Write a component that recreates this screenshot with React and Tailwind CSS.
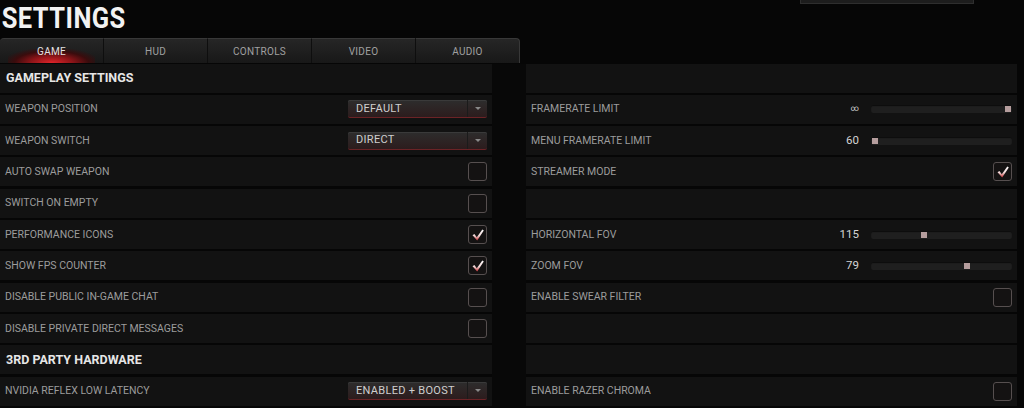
import React from 'react';

const font = { fontFamily: 'Roboto, "Liberation Sans", sans-serif' };

const Check = () => (
    <svg width="14" height="14" viewBox="0 0 14 14">
        <defs>
            <linearGradient id="chk" x1="0" y1="0" x2="0" y2="1">
                <stop offset="0" stopColor="#ffffff" />
                <stop offset="0.55" stopColor="#f1d6d6" />
                <stop offset="1" stopColor="#c0262b" />
            </linearGradient>
        </defs>
        <path d="M1.5 7.2 L3.4 6 L5.8 9.2 L11.3 1.6 L12.8 2.6 L6.2 12.6 Z" fill="url(#chk)" />
    </svg>
);

const Checkbox = ({ checked }) => (
    <div className="w-[19px] h-[19px] rounded-[3px] border border-[#564f4f] bg-[#141212] flex items-center justify-center">
        {checked && <Check />}
    </div>
);

const Dropdown = ({ value }) => (
    <div className="w-[139px] h-[18px] flex rounded-[2px] border-b border-[#6b2326] bg-gradient-to-b from-[#2d2d2d] to-[#2c1c1d] shadow-[inset_0_1px_0_#3a3a3a]">
        <div className="flex-1 flex items-center pl-2 text-[11px] tracking-[0.3px] text-[#cfcfcf]">{value}</div>
        <div className="w-[20px] border-l border-[#1b1b1b] flex items-center justify-center">
            <div className="w-0 h-0 border-l-[3px] border-r-[3px] border-t-[3px] border-l-transparent border-r-transparent border-t-[#8a8a8a]" />
        </div>
    </div>
);

const Slider = ({ label, pos, small }) => (
    <div className="flex items-center">
        <div className={`w-[40px] text-right text-[#d4d4d4] pr-[1px] ${small ? 'text-[8px]' : 'text-[11.5px]'}`}>{label}</div>
        <div className="ml-[11px] relative w-[141px] h-[8px] rounded-[2px] bg-[#1f1f1f] shadow-[inset_0_1px_1px_#0c0c0c]">
            <div className="absolute top-[1px] w-[6px] h-[6px] bg-[#b59d9d]" style={{ left: pos }} />
        </div>
    </div>
);

const Row = ({ item }) => {
    if (item.type === 'empty') return <div className="h-[29px] bg-[#121212]" />;
    if (item.type === 'header')
        return (
            <div className="h-[29px] bg-[#121212] flex items-center pl-[6px] text-[12.5px] font-bold text-[#e6e6e6]">
                {item.label}
            </div>
        );
    return (
        <div className="h-[29px] bg-[#121212] flex items-center justify-between pl-[5px] pr-[5px]">
            <div className="text-[10.5px] text-[#9c9c9c]">{item.label}</div>
            {item.type === 'drop' && <Dropdown value={item.value} />}
            {item.type === 'check' && <Checkbox checked={item.checked} />}
            {item.type === 'slider' && <Slider label={item.value} pos={item.pos} small={item.small} />}
        </div>
    );
};

const left = [
    { type: 'header', label: 'GAMEPLAY SETTINGS' },
    { type: 'drop', label: 'WEAPON POSITION', value: 'DEFAULT' },
    { type: 'drop', label: 'WEAPON SWITCH', value: 'DIRECT' },
    { type: 'check', label: 'AUTO SWAP WEAPON' },
    { type: 'check', label: 'SWITCH ON EMPTY' },
    { type: 'check', label: 'PERFORMANCE ICONS', checked: true },
    { type: 'check', label: 'SHOW FPS COUNTER', checked: true },
    { type: 'check', label: 'DISABLE PUBLIC IN-GAME CHAT' },
    { type: 'check', label: 'DISABLE PRIVATE DIRECT MESSAGES' },
    { type: 'header', label: '3RD PARTY HARDWARE' },
    { type: 'drop', label: 'NVIDIA REFLEX LOW LATENCY', value: 'ENABLED + BOOST' },
];

const right = [
    { type: 'empty' },
    { type: 'slider', label: 'FRAMERATE LIMIT', value: '∞', pos: 134, small: true },
    { type: 'slider', label: 'MENU FRAMERATE LIMIT', value: '60', pos: 1 },
    { type: 'check', label: 'STREAMER MODE', checked: true },
    { type: 'empty' },
    { type: 'slider', label: 'HORIZONTAL FOV', value: '115', pos: 50 },
    { type: 'slider', label: 'ZOOM FOV', value: '79', pos: 93 },
    { type: 'check', label: 'ENABLE SWEAR FILTER' },
    { type: 'empty' },
    { type: 'empty' },
    { type: 'check', label: 'ENABLE RAZER CHROMA' },
];

const tabs = ['GAME', 'HUD', 'CONTROLS', 'VIDEO', 'AUDIO'];

const App = () => {
    return (
        <div className="w-[1024px] h-[408px] overflow-hidden bg-[#060606]" style={font}>
            {/* Title */}
            <div className="h-[38px] flex items-start justify-between">
                <h1 className="pl-[2px] pt-[3px] text-[30px] leading-[30px] font-bold text-[#f2f2f2] tracking-[0.5px] scale-x-[0.85] origin-left">SETTINGS</h1>
                <div className="mr-[50px] w-[174px] h-[4px] bg-[#1d1d1d] border-x border-b border-[#2e2e2e]" />
            </div>

            {/* Tabs */}
            <div className="flex w-[520px] h-[25px]">
                {tabs.map((t, i) => (
                    <div
                        key={t}
                        className={`relative flex-1 flex items-center justify-center text-[10px] tracking-[0.3px] border-t border-[#383838] bg-gradient-to-b from-[#262626] to-[#181818] ${i === 4 ? 'rounded-tr-[4px] border-r' : ''} ${i === 0 ? 'rounded-tl-[4px]' : 'border-l border-l-[#0e0e0e]'} ${i === 0 ? 'text-[#e2e2e2]' : 'text-[#a0a0a0]'}`}
                    >
                        {i === 0 && (
                            <div className="absolute bottom-0 left-[8px] right-[8px] h-[14px] bg-[radial-gradient(ellipse_at_bottom,#e0242a_0%,#8a1418_35%,#3a0c0d_60%,transparent_80%)]" />
                        )}
                        <span className="relative">{t}</span>
                    </div>
                ))}
            </div>

            {/* Panels */}
            <div className="flex pt-[0.5px]">
                <div className="w-[492px] grid gap-y-[2.33px]">
                    {left.map((it, i) => (
                        <Row key={i} item={it} />
                    ))}
                </div>
                <div className="w-[34px] bg-[#080808]" />
                <div className="w-[494px] grid gap-y-[2.33px] pr-[3px]">
                    {right.map((it, i) => (
                        <Row key={i} item={it} />
                    ))}
                </div>
            </div>
        </div>
    );
};

export default App;
